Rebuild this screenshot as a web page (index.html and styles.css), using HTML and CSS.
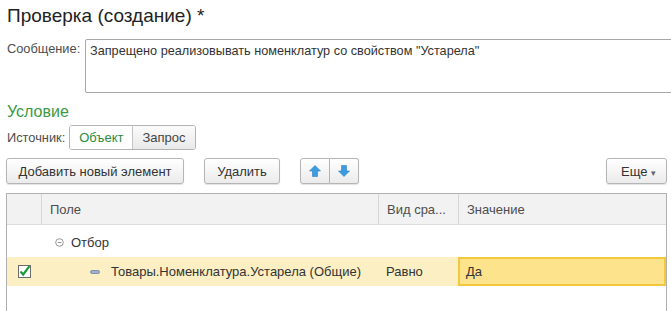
FILE: index.html
```html
<!DOCTYPE html>
<html lang="ru">
<head>
  <meta charset="UTF-8">
  <title>Проверка (создание)</title>
  <link rel="stylesheet" href="styles.css">
</head>
<body>
  <h1 class="title">Проверка (создание) *</h1>

  <div class="field-row">
    <label class="field-label">Сообщение:</label>
    <div class="memo">Запрещено реализовывать номенклатур со свойством "Устарела"</div>
  </div>

  <h2 class="group-title">Условие</h2>

  <div class="source-row">
    <span class="field-label">Источник:</span>
    <div class="toggle">
      <button class="toggle-item active">Объект</button>
      <button class="toggle-item">Запрос</button>
    </div>
  </div>

  <div class="toolbar">
    <button class="btn btn-add">Добавить новый элемент</button>
    <button class="btn btn-delete">Удалить</button>
    <div class="btn-group">
      <button class="btn btn-icon">
        <svg width="12" height="12" viewBox="0 0 12 12"><path d="M6 0.5 L11.5 6 L8.5 6 L8.5 11.5 L3.5 11.5 L3.5 6 L0.5 6 Z" fill="#3d9be0" stroke="#2a7fc4" stroke-width="0.6"/></svg>
      </button>
      <button class="btn btn-icon">
        <svg width="12" height="12" viewBox="0 0 12 12"><path d="M6 11.5 L11.5 6 L8.5 6 L8.5 0.5 L3.5 0.5 L3.5 6 L0.5 6 Z" fill="#3d9be0" stroke="#2a7fc4" stroke-width="0.6"/></svg>
      </button>
    </div>
    <button class="btn btn-more">Еще <span class="caret">▾</span></button>
  </div>

  <div class="grid">
    <div class="grid-row grid-head">
      <div class="cell c-check"></div>
      <div class="cell c-field">Поле</div>
      <div class="cell c-kind">Вид сра...</div>
      <div class="cell c-value">Значение</div>
    </div>
    <div class="grid-row">
      <div class="cell c-check"></div>
      <div class="cell c-field">
        <span class="tree-toggle">
          <svg width="9" height="9" viewBox="0 0 9 9"><circle cx="4.5" cy="4.5" r="3.8" fill="none" stroke="#8a8a8a" stroke-width="0.9"/><path d="M2.6 4.5 H6.4" stroke="#8a8a8a" stroke-width="0.9"/></svg>
        </span>Отбор
      </div>
      <div class="cell c-kind"></div>
      <div class="cell c-value"></div>
    </div>
    <div class="grid-row selected">
      <div class="cell c-check">
        <span class="checkbox">
          <svg width="13" height="13" viewBox="0 0 13 13"><rect x="0.5" y="0.5" width="12" height="12" fill="#fff" stroke="#6b6b6b"/><path d="M2.5 6.5 L5.2 9.5 L11.5 1.2" fill="none" stroke="#1a9a3a" stroke-width="2.2"/></svg>
        </span>
      </div>
      <div class="cell c-field indent">
        <span class="item-icon"></span>Товары.Номенклатура.Устарела (Общие)
      </div>
      <div class="cell c-kind">Равно</div>
      <div class="cell c-value current">Да</div>
    </div>
  </div>
</body>
</html>
```

FILE: styles.css
```css
html, body {
  overflow: hidden;
}
body {
  margin: 0;
  padding: 0 6px;
  font-family: Arial, "Liberation Sans", sans-serif;
  font-size: 13px;
  color: #333;
  background-color: #fff;
}
.title {
  margin: 0;
  padding: 5px 1px 0;
  font-size: 19px;
  font-weight: normal;
  line-height: 22px;
  color: #222;
}
.field-row {
  display: flex;
  margin-top: 12px;
}
.field-label {
  width: 78px;
  padding-left: 1px;
  color: #4d4d4d;
  font-size: 12.8px;
  line-height: 16px;
}
.field-row .field-label {
  padding-top: 2px;
}
.memo {
  flex: 1;
  height: 46px;
  margin-right: -12px;
  padding: 3px 4px;
  border: 1px solid #a8a8a8;
  border-radius: 2px;
  color: #333;
  font-size: 12.7px;
  line-height: 16px;
}
.group-title {
  margin: 9px 0 0;
  padding-left: 1px;
  font-size: 16px;
  font-weight: normal;
  line-height: 20px;
  color: #3b9a47;
}
.source-row {
  display: flex;
  align-items: center;
  margin-top: 3px;
}
.source-row .field-label {
  width: auto;
  margin-right: 4px;
}
.toggle {
  display: flex;
  border: 1px solid #b3b3b3;
  border-radius: 3px;
  overflow: hidden;
}
.toggle-item {
  height: 23px;
  padding: 0 9px;
  border: 0;
  font-family: inherit;
  font-size: 13px;
  color: #444;
  background: linear-gradient(#fbfbfb, #e9e9e9);
}
.toggle-item + .toggle-item {
  border-left: 1px solid #c4c4c4;
}
.toggle-item.active {
  background: #fff;
  color: #2b8c3e;
}
.toolbar {
  display: flex;
  align-items: center;
  margin-top: 8px;
}
.btn {
  height: 26px;
  padding: 0 12px;
  border: 1px solid #b5b5b5;
  border-radius: 3px;
  background: linear-gradient(#ffffff, #ebebeb);
  box-shadow: 0 1px 1px rgba(0, 0, 0, 0.12);
  font-family: inherit;
  font-size: 13px;
  color: #333;
  white-space: nowrap;
}
.btn-add {
  width: 178px;
  padding: 0;
}
.btn-delete {
  width: 76px;
  margin-left: 20px;
}
.btn-group {
  display: flex;
  margin-left: 20px;
}
.btn-icon {
  width: 30px;
  padding: 0;
  display: flex;
  align-items: center;
  justify-content: center;
}
.btn-group .btn-icon:first-child {
  border-radius: 3px 0 0 3px;
}
.btn-group .btn-icon + .btn-icon {
  width: 29px;
  border-left: 0;
  border-radius: 0 3px 3px 0;
}
.btn-more {
  width: 61px;
  margin-left: auto;
  margin-right: -2px;
  padding: 0 0 0 4px;
}
.caret {
  font-size: 9px;
  color: #666;
}
.grid {
  margin-top: 9px;
  width: 659px;
  height: 120px;
  border: 1px solid #b0b0b0;
  border-bottom: 0;
}
.grid-row {
  display: flex;
  height: 30px;
}
.grid-head {
  background: #f2f2f2;
  border-bottom: 1px solid #dcdcdc;
}
.cell {
  display: flex;
  align-items: center;
  padding-left: 8px;
  box-sizing: border-box;
  white-space: nowrap;
  overflow: hidden;
}
.c-check {
  width: 34px;
  padding-left: 0;
  justify-content: center;
}
.c-field {
  width: 337px;
}
.c-kind {
  width: 80px;
}
.c-value {
  flex: 1;
}
.grid-head .cell {
  color: #4d4d4d;
}
.grid-head .cell + .cell {
  border-left: 1px solid #d6d6d6;
}
.grid-row:nth-child(2) .c-field {
  padding-left: 14px;
}
.grid-row:nth-child(2) {
  padding-top: 2px;
}
.tree-toggle {
  display: flex;
  margin-right: 7px;
}
.selected {
  height: 29px;
  background: #fbefc3;
}
.indent {
  padding-left: 49px;
}
.item-icon {
  width: 10px;
  height: 4px;
  margin-right: 11px;
  border-radius: 2px;
  background: #9fb4c9;
  border: 1px solid #7f95ab;
  box-sizing: border-box;
}
.checkbox {
  display: flex;
  margin-left: 1px;
}
.current {
  background: #fde38c;
  border: 2px solid #f2c93c;
  padding-left: 6px;
}
```
